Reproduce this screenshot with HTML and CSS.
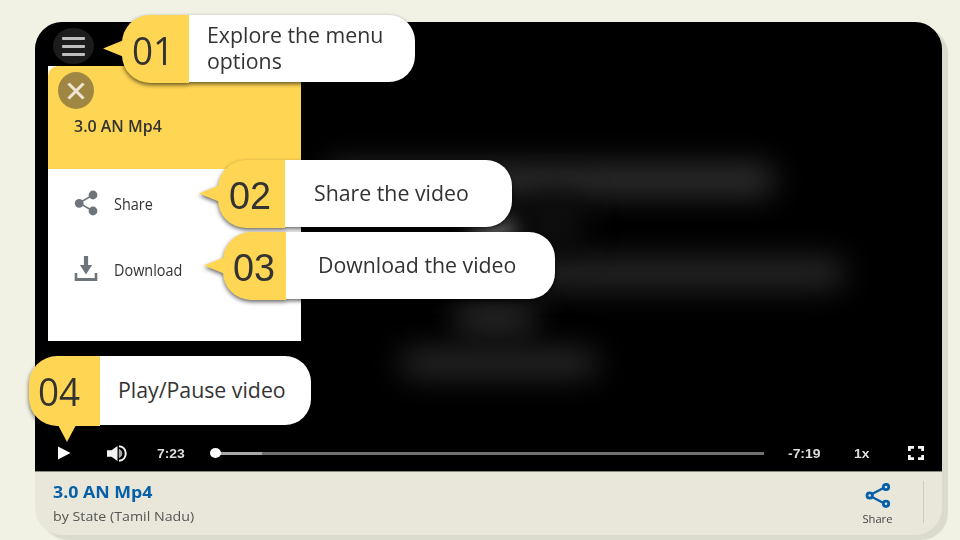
FILE: index.html
```html
<!DOCTYPE html>
<html lang="en">
<head>
<meta charset="utf-8">
<title>Video player guide</title>
<link rel="stylesheet" href="styles.css">
</head>
<body>
<main class="player">
  <section class="video">
    <div class="haze haze-a"></div>
    <div class="haze haze-b"></div>
    <div class="haze haze-c"></div>
    <div class="haze haze-d"></div>
    <div class="haze haze-e"></div>
    <div class="haze haze-f"></div>
    <button class="menu-button" aria-label="Menu"><i></i><i></i><i></i></button>
    <aside class="menu">
      <header class="menu-head">
        <button class="close" aria-label="Close">
          <svg width="18" height="18" viewBox="0 0 18 18"><path d="M1.500 1.500l15 15M16.500 1.500l-15 15" stroke="#eee6d2" stroke-width="3"/></svg>
        </button>
        <h2><span>3.0 AN Mp4</span></h2>
      </header>
      <div class="menu-item">
        <svg width="24" height="26" viewBox="0 0 24 26"><path d="M19 5L5 13l14 8" fill="none" stroke="#6d757b" stroke-width="1.500"/><g fill="#6d757b"><circle cx="19" cy="5" r="4.400"/><circle cx="5.200" cy="13.300" r="4.400"/><circle cx="19" cy="21" r="4.400"/></g></svg>
        <span>Share</span>
      </div>
      <div class="menu-item">
        <svg width="24" height="26" viewBox="0 0 24 26"><path d="M9.900 0h4.200v9h4L12 18.500 5.900 9h4zM.700 17h2.600v5h17.400v-5h2.600v8H.700z" fill="#6d757b"/></svg>
        <span>Download</span>
      </div>
    </aside>
    <div class="controls">
      <svg class="play" width="13" height="14" viewBox="0 0 13 14"><path d="M0 .500L12.500 7 0 13.500z" fill="#fff"/></svg>
      <svg class="volume" width="20" height="17" viewBox="0 0 20 17"><path d="M0 5.300h4.500L10.500 1v15l-6-4.300H0z" fill="#f4f4f4"/><path d="M12.300 4.500c3.200 1.500 3.200 6.500 0 8z" fill="#aaa" stroke="#bbb" stroke-width="1"/><path d="M12 1.300c9 .700 9 13.700 0 14.400" fill="none" stroke="#f4f4f4" stroke-width="2"/></svg>
      <span class="elapsed">7:23</span>
      <div class="track"><i class="loaded"></i><i class="knob"></i></div>
      <span class="remaining">-7:19</span>
      <span class="rate">1x</span>
      <svg class="full" width="16" height="14" viewBox="0 0 16 14"><path d="M1.400 5V1.400H6M10 1.400h4.600V5M14.600 9v3.600H10M6 12.600H1.400V9" fill="none" stroke="#f4f4f4" stroke-width="2.800"/></svg>
    </div>
  </section>
  <footer class="info">
    <div class="about">
      <h1><span>3.0 AN Mp4</span></h1>
      <p><span>by State (Tamil Nadu)</span></p>
    </div>
    <div class="share">
      <svg width="26" height="25" viewBox="0 0 26 25"><g fill="none" stroke="#0560a8"><path d="M18.500 5L7 11M7 14l11.500 6" stroke-width="2.400"/><g stroke-width="2.800"><circle cx="21" cy="4" r="2.700"/><circle cx="4.700" cy="12.500" r="2.700"/><circle cx="21" cy="20.800" r="2.700"/></g></g></svg>
      <span>Share</span>
    </div>
  </footer>
</main>
<div class="callout c1"><b class="alt"><span>01</span></b><p><span>Explore the menu</span><span>options</span></p></div>
<div class="callout c2"><b><span>02</span></b><p><span>Share the video</span></p></div>
<div class="callout c3"><b><span>03</span></b><p><span>Download the video</span></p></div>
<div class="callout c4"><b class="alt"><span>04</span></b><p><span>Play/Pause video</span></p></div>
</body>
</html>
```

FILE: styles.css
```css
* { box-sizing: border-box; }
body {
  margin: 0;
  width: 960px;
  height: 540px;
  padding: 22px 18px 5px 35px;
  overflow: hidden;
  background: #f1f2e4;
  font-family: "Open Sans", "Noto Sans", sans-serif;
  color: #333;
}
h1, h2, p { margin: 0; }
button { border: 0; padding: 0; color: inherit; }
svg { display: block; flex: none; }
span { display: inline-block; transform-origin: left center; white-space: nowrap; }

.player {
  position: relative;
  display: flex;
  flex-direction: column;
  width: 907px;
  height: 513px;
  border-radius: 27px;
  background: #e9e7d9;
  box-shadow: 6px 5px 1px #dadacd;
}
.video {
  position: relative;
  flex: none;
  display: flex;
  flex-direction: column;
  height: 449px;
  border-radius: 27px 27px 0 0;
  background: #000;
  box-shadow: 0 1px 0 #8b8b82;
}
.menu-button {
  display: flex;
  flex-direction: column;
  align-items: center;
  justify-content: center;
  gap: 5px;
  width: 41px;
  height: 36px;
  margin: 6px 0 0 18px;
  border-radius: 50%;
  background: #1c1c1c;
}
.menu-button i { width: 23px; height: 3px; border-radius: 1px; background: #bebebe; }

.haze { position: absolute; border-radius: 20px; filter: blur(15px); background: #303030; }
.haze-a { left: 290px; top: 142px; width: 450px; height: 32px; }
.haze-b { left: 480px; top: 236px; width: 330px; height: 30px; background: #292929; }
.haze-c { left: 418px; top: 283px; width: 84px; height: 26px; background: #303030; }
.haze-d { left: 365px; top: 328px; width: 198px; height: 26px; background: #2b2b2b; }
.haze-e { left: 435px; top: 198px; width: 50px; height: 24px; background: #707070; filter: blur(11px); }
.haze-f { left: 490px; top: 170px; width: 60px; height: 60px; background: #0e0e0e; }

.menu {
  position: absolute;
  left: 13px;
  top: 44px;
  width: 253px;
  height: 275px;
  background: #fff;
}
.menu-head { height: 103px; padding: 6px 10px; border-radius: 10px 0 0; background: #ffd653; }
.close { display: grid; place-items: center; width: 36px; height: 37px; border-radius: 50%; background: #9f8743; }
.menu h2 { margin: 5px 0 0 16px; font-size: 17px; font-weight: 600; line-height: 24px; }
.menu h2 span { transform: scaleX(.94); }
.menu-item { display: flex; align-items: center; gap: 16px; height: 66px; padding: 3px 0 0 26px; font-size: 15.5px; }
.menu-item span { transform: scaleX(.93); }
.menu-item svg { margin-bottom: 2px; }

.controls {
  display: flex;
  align-items: center;
  height: 20px;
  margin-top: auto;
  margin-bottom: 8px;
  padding-left: 23px;
  font: bold 13px "Liberation Sans", sans-serif;
  color: #ddd;
}
.controls span { transform: scaleX(1.07); }
.volume { margin-left: 36px; }
.elapsed { width: 28px; margin-left: 30px; }
.track { position: relative; width: 549px; height: 3px; margin-left: 30px; background: #717171; }
.loaded { display: block; width: 47px; height: 3px; background: #a8a8a8; }
.knob { position: absolute; left: -5px; top: -4px; width: 11px; height: 10px; border-radius: 50%; background: #fff; }
.remaining { width: 33px; margin-left: 24px; }
.rate { width: 16px; margin-left: 33px; }
.full { margin-left: 38px; }

.info { display: flex; justify-content: space-between; height: 64px; padding: 10px 18px 0; }
.info h1 { font-size: 16px; font-weight: 700; line-height: 23px; color: #0560a8; }
.info h1 span { transform: scaleX(1.11); }
.info p { font-size: 12px; line-height: 25px; color: #555; }
.info p span { transform: scaleX(1.185); }
.share {
  display: flex;
  flex-direction: column;
  align-items: center;
  width: 92px;
  height: 42px;
  border-right: 1px solid #c9cbc5;
  font-size: 10px;
  line-height: 14px;
  color: #444;
}
.share svg { margin: 2px 0 4px; }
.share span { transform: scaleX(1.12); transform-origin: center; }

.callout {
  position: absolute;
  display: flex;
  height: 67px;
  filter: drop-shadow(0 2px 2px #0009);
  color: #333;
}
.callout b {
  position: relative;
  display: flex;
  align-items: center;
  width: 67px;
  height: 68px;
  padding: 3px 0 0 11px;
  border-radius: 28px 0 0 28px;
  background: #ffd653;
  font: 39px "Liberation Sans", sans-serif;
}
.callout b span { transform: scaleX(.97); }
.callout b.alt { padding: 2px 0 0 10px; font: 38px/68px "Open Sans", sans-serif; }
.callout b::before {
  content: "";
  position: absolute;
  left: -19px;
  top: 25px;
  width: 21px;
  height: 17px;
  background: #ffd653;
  clip-path: polygon(0 50%, 100% 0, 100% 100%);
}
.callout p {
  display: flex;
  flex-direction: column;
  justify-content: center;
  height: 67px;
  padding-left: 29px;
  padding-bottom: 1px;
  border-radius: 0 26px 26px 0;
  background: #fff;
  font-size: 21.3px;
  line-height: 26px;
}
.c1 { left: 122px; top: 15px; }
.c1 p { width: 226px; padding-left: 18px; }
.c2 { left: 218px; top: 160px; }
.c2 p { width: 227px; }
.c3 { left: 223px; top: 232px; }
.c3 b { width: 63px; padding-left: 10px; }
.c3 p { width: 269px; padding-left: 32px; }
.c4 { left: 29px; top: 356px; height: 69px; }
.c4 b { width: 71px; height: 70px; }
.callout.c4 b.alt { padding: 0 0 0 9px; }
.c4 p { width: 211px; height: 69px; padding-left: 18px; }
.c4 b::before {
  left: 29px;
  top: 69px;
  width: 18px;
  height: 17px;
  clip-path: polygon(0 0, 100% 0, 50% 100%);
}
```
